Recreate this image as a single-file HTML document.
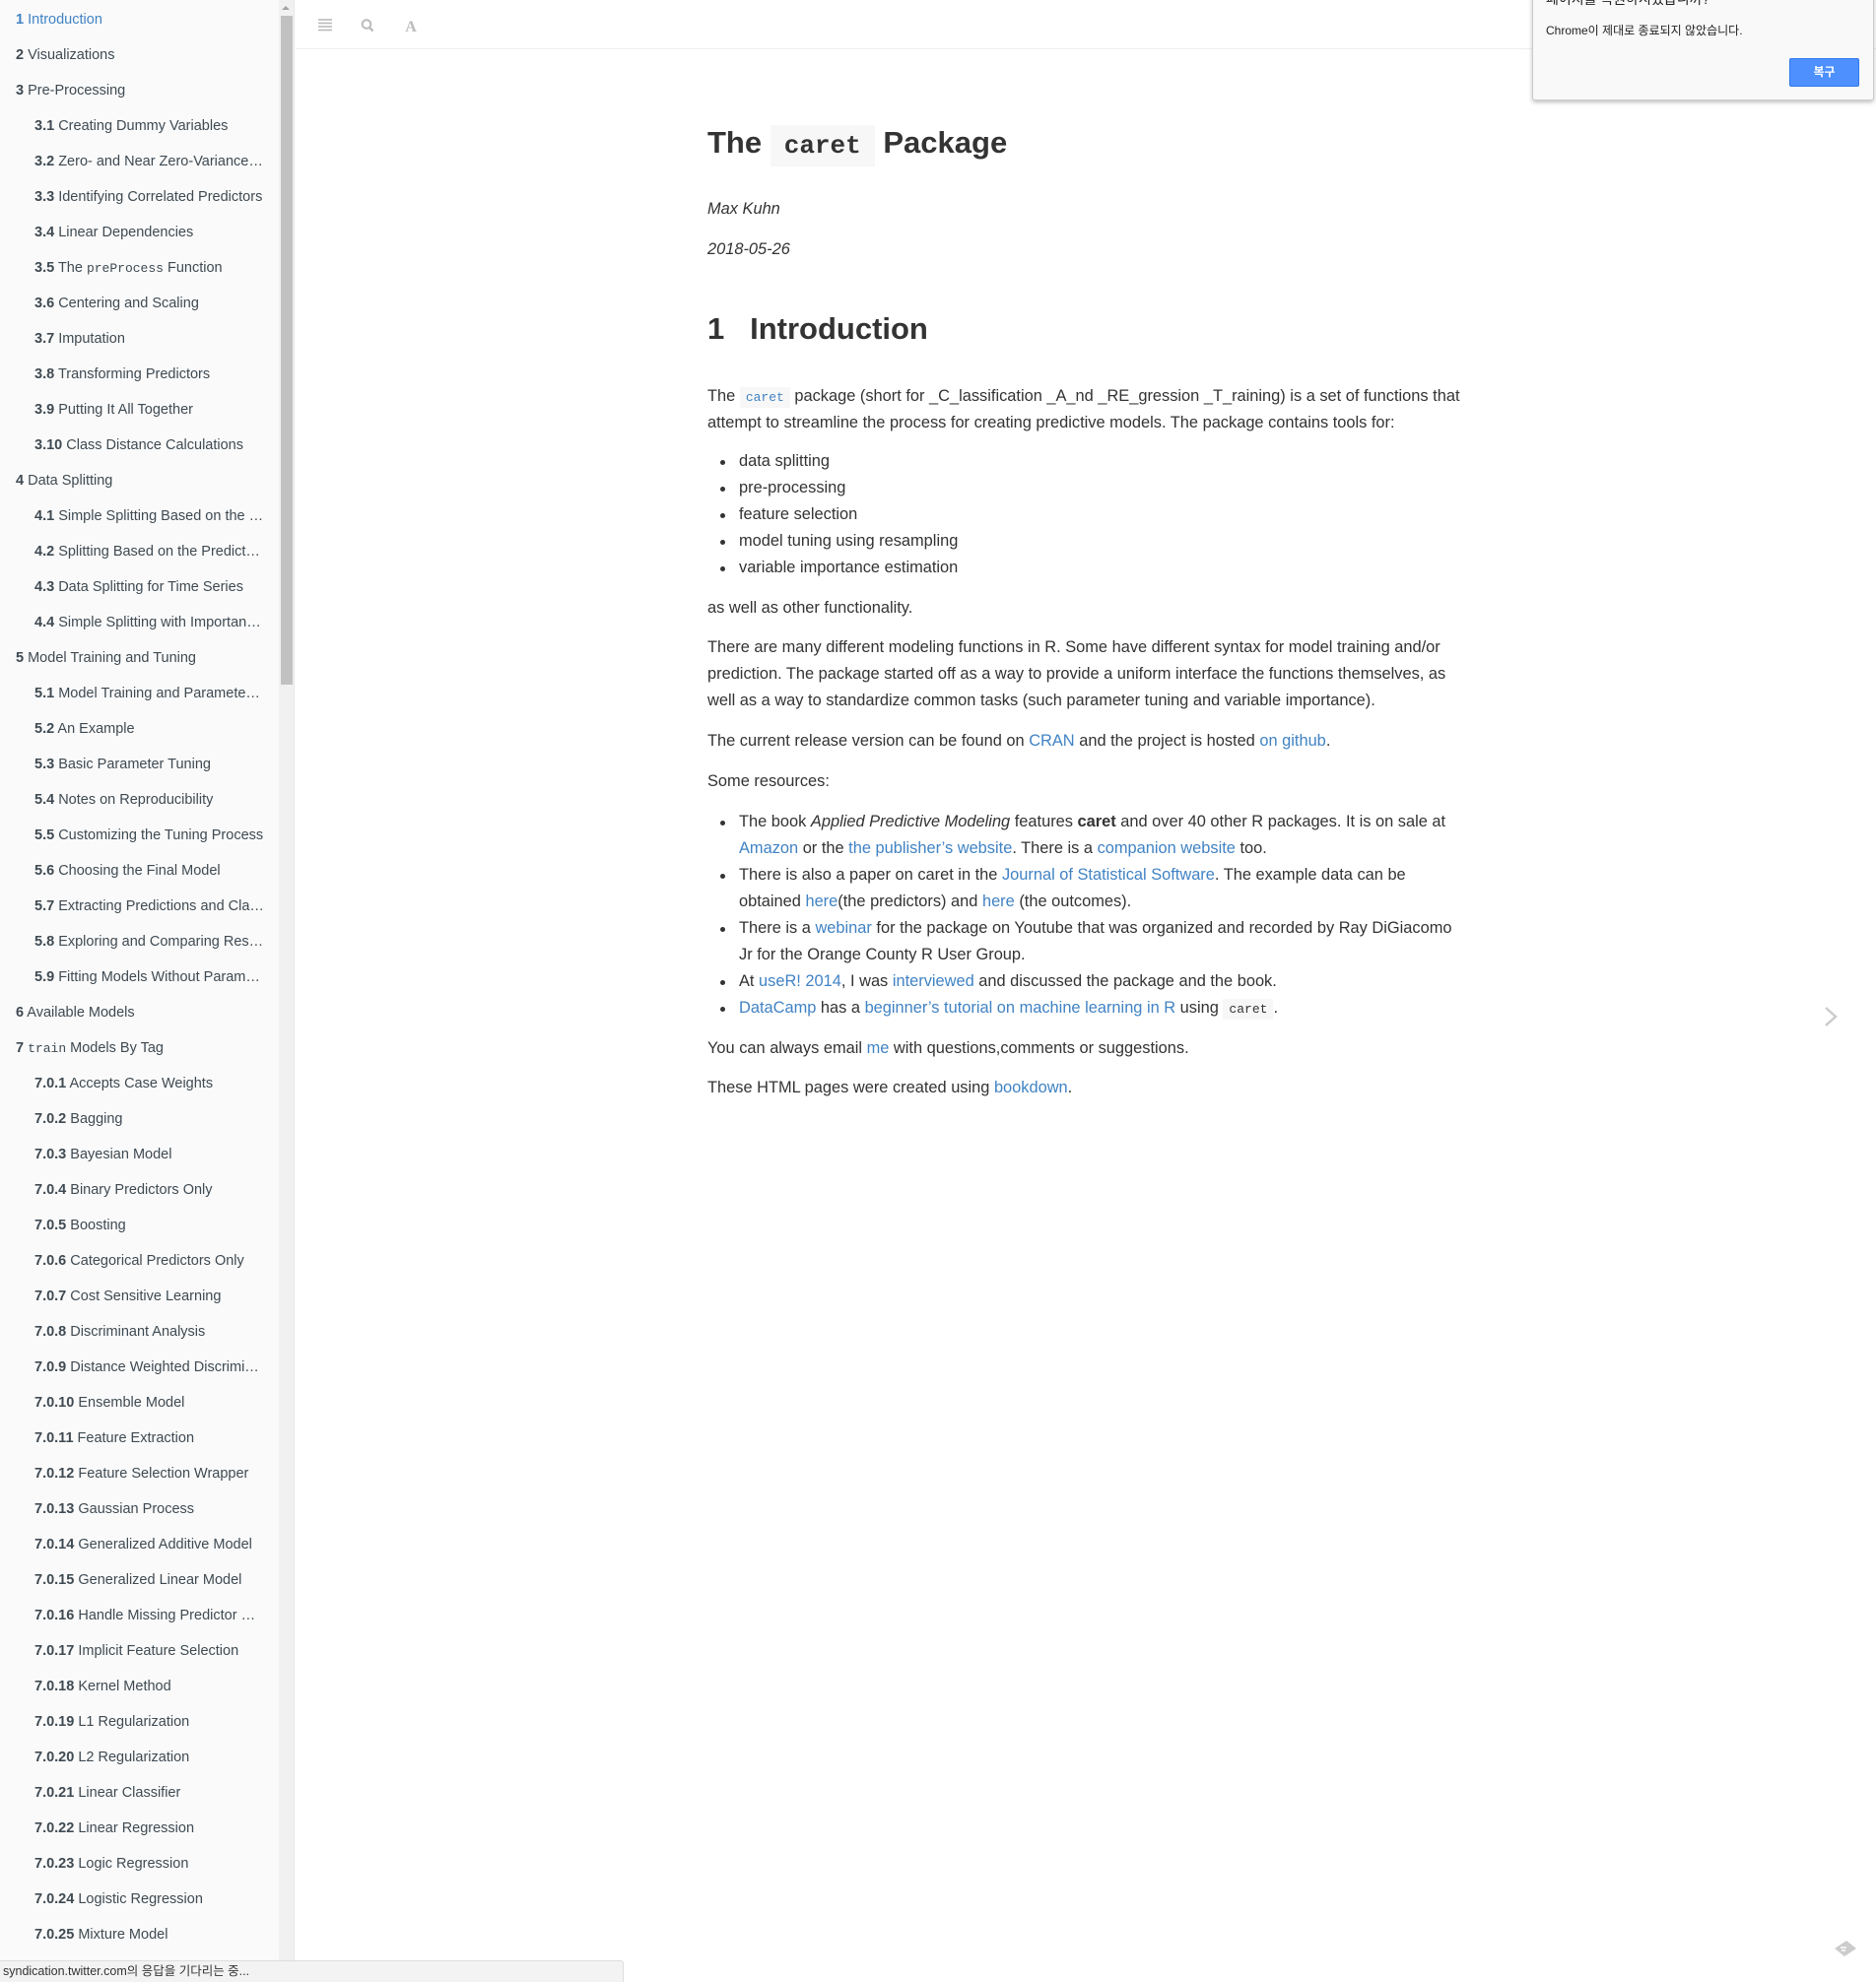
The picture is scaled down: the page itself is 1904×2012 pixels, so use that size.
<!DOCTYPE html>
<html><head><meta charset="utf-8"><style>
*{margin:0;padding:0;box-sizing:border-box}
body{width:1904px;height:2012px;overflow:hidden;background:#fff;font-family:"Liberation Sans","Noto Sans CJK KR",sans-serif;color:#333;position:relative}
#side{position:absolute;left:0;top:0;width:283px;height:2012px;background:#fafafa}
#side div{position:absolute;white-space:nowrap;font-size:14.5px;color:#3f4a52;line-height:20px;transform:translateY(2px)}
#side b{font-weight:bold}
#track{position:absolute;left:283px;top:0;width:16px;height:2012px;background:#f1f1f1;border-right:1px solid #e6e6e6}
#thumb{position:absolute;left:285px;top:16px;width:12px;height:679px;background:#c1c1c1}
#bar{position:absolute;left:300px;top:0;right:0;height:50px;border-bottom:1px solid #eee}
#main{position:absolute;left:0;top:2px;width:1904px;height:1200px}
.t{position:absolute;white-space:nowrap;font-size:16.4px;line-height:27px;color:#333}
a{color:#4183c4;text-decoration:none}
code{font-family:"Liberation Mono",monospace;background:#f7f7f7;font-size:13px;padding:3px 6px;color:#333}
.ac{color:#4183c4}
li.t::before{content:"";position:absolute;left:-19px;top:12px;width:5px;height:5px;border-radius:50%;background:#333}
</style></head><body>
<div id="side">
<div style="left:16px;top:8px;color:#4183c4"><b>1</b> Introduction</div>
<div style="left:16px;top:44px"><b>2</b> Visualizations</div>
<div style="left:16px;top:80px"><b>3</b> Pre-Processing</div>
<div style="left:35px;top:116px"><b>3.1</b> Creating Dummy Variables</div>
<div style="left:35px;top:152px"><b>3.2</b> Zero- and Near Zero-Variance…</div>
<div style="left:35px;top:188px"><b>3.3</b> Identifying Correlated Predictors</div>
<div style="left:35px;top:224px"><b>3.4</b> Linear Dependencies</div>
<div style="left:35px;top:260px"><b>3.5</b> The <span style="font-family:'Liberation Mono',monospace;font-size:13px">preProcess</span> Function</div>
<div style="left:35px;top:296px"><b>3.6</b> Centering and Scaling</div>
<div style="left:35px;top:332px"><b>3.7</b> Imputation</div>
<div style="left:35px;top:368px"><b>3.8</b> Transforming Predictors</div>
<div style="left:35px;top:404px"><b>3.9</b> Putting It All Together</div>
<div style="left:35px;top:440px"><b>3.10</b> Class Distance Calculations</div>
<div style="left:16px;top:476px"><b>4</b> Data Splitting</div>
<div style="left:35px;top:512px"><b>4.1</b> Simple Splitting Based on the …</div>
<div style="left:35px;top:548px"><b>4.2</b> Splitting Based on the Predict…</div>
<div style="left:35px;top:584px"><b>4.3</b> Data Splitting for Time Series</div>
<div style="left:35px;top:620px"><b>4.4</b> Simple Splitting with Importan…</div>
<div style="left:16px;top:656px"><b>5</b> Model Training and Tuning</div>
<div style="left:35px;top:692px"><b>5.1</b> Model Training and Paramete…</div>
<div style="left:35px;top:728px"><b>5.2</b> An Example</div>
<div style="left:35px;top:764px"><b>5.3</b> Basic Parameter Tuning</div>
<div style="left:35px;top:800px"><b>5.4</b> Notes on Reproducibility</div>
<div style="left:35px;top:836px"><b>5.5</b> Customizing the Tuning Process</div>
<div style="left:35px;top:872px"><b>5.6</b> Choosing the Final Model</div>
<div style="left:35px;top:908px"><b>5.7</b> Extracting Predictions and Cla…</div>
<div style="left:35px;top:944px"><b>5.8</b> Exploring and Comparing Res…</div>
<div style="left:35px;top:980px"><b>5.9</b> Fitting Models Without Param…</div>
<div style="left:16px;top:1016px"><b>6</b> Available Models</div>
<div style="left:16px;top:1052px"><b>7</b> <span style="font-family:'Liberation Mono',monospace;font-size:13px">train</span> Models By Tag</div>
<div style="left:35px;top:1088px"><b>7.0.1</b> Accepts Case Weights</div>
<div style="left:35px;top:1124px"><b>7.0.2</b> Bagging</div>
<div style="left:35px;top:1160px"><b>7.0.3</b> Bayesian Model</div>
<div style="left:35px;top:1196px"><b>7.0.4</b> Binary Predictors Only</div>
<div style="left:35px;top:1232px"><b>7.0.5</b> Boosting</div>
<div style="left:35px;top:1268px"><b>7.0.6</b> Categorical Predictors Only</div>
<div style="left:35px;top:1304px"><b>7.0.7</b> Cost Sensitive Learning</div>
<div style="left:35px;top:1340px"><b>7.0.8</b> Discriminant Analysis</div>
<div style="left:35px;top:1376px"><b>7.0.9</b> Distance Weighted Discrimi…</div>
<div style="left:35px;top:1412px"><b>7.0.10</b> Ensemble Model</div>
<div style="left:35px;top:1448px"><b>7.0.11</b> Feature Extraction</div>
<div style="left:35px;top:1484px"><b>7.0.12</b> Feature Selection Wrapper</div>
<div style="left:35px;top:1520px"><b>7.0.13</b> Gaussian Process</div>
<div style="left:35px;top:1556px"><b>7.0.14</b> Generalized Additive Model</div>
<div style="left:35px;top:1592px"><b>7.0.15</b> Generalized Linear Model</div>
<div style="left:35px;top:1628px"><b>7.0.16</b> Handle Missing Predictor …</div>
<div style="left:35px;top:1664px"><b>7.0.17</b> Implicit Feature Selection</div>
<div style="left:35px;top:1700px"><b>7.0.18</b> Kernel Method</div>
<div style="left:35px;top:1736px"><b>7.0.19</b> L1 Regularization</div>
<div style="left:35px;top:1772px"><b>7.0.20</b> L2 Regularization</div>
<div style="left:35px;top:1808px"><b>7.0.21</b> Linear Classifier</div>
<div style="left:35px;top:1844px"><b>7.0.22</b> Linear Regression</div>
<div style="left:35px;top:1880px"><b>7.0.23</b> Logic Regression</div>
<div style="left:35px;top:1916px"><b>7.0.24</b> Logistic Regression</div>
<div style="left:35px;top:1952px"><b>7.0.25</b> Mixture Model</div>
</div>
<div id="track"></div><div id="thumb"></div>
<div style="position:absolute;left:286px;top:6px;width:0;height:0;border-left:4px solid transparent;border-right:4px solid transparent;border-bottom:4px solid #a3a3a3"></div>
<div id="bar"></div>
<svg style="position:absolute;left:322px;top:17px" width="104" height="18">
<g stroke="#bbb" stroke-width="1.6"><line x1="1" y1="3" x2="15" y2="3"/><line x1="1" y1="6.5" x2="15" y2="6.5"/><line x1="1" y1="10" x2="15" y2="10"/><line x1="1" y1="13.5" x2="15" y2="13.5"/></g>
<circle cx="50" cy="7.5" r="4.3" fill="none" stroke="#bbb" stroke-width="2"/><line x1="53" y1="11" x2="56.5" y2="14.5" stroke="#bbb" stroke-width="2.4"/>
<text x="95" y="15" font-family="Liberation Serif" font-weight="bold" font-size="16" fill="#bbb" text-anchor="middle">A</text>
</svg>

<div id="main">
<div class="t" style="left:718px;top:122px;font-size:31px;font-weight:bold;line-height:42px;color:#333">The <span style="font-family:'Liberation Mono',monospace;font-size:26px;font-weight:bold;background:#f7f7f7;padding:6px 14px;color:#333">caret</span> Package</div>
<div class="t" style="left:718px;top:197px;font-style:italic">Max Kuhn</div>
<div class="t" style="left:718px;top:238px;font-style:italic">2018-05-26</div>
<div class="t" style="left:718px;top:311px;font-size:31px;font-weight:bold;line-height:42px">1&nbsp;&nbsp; Introduction</div>

<div class="t" style="left:718px;top:387px">The <code class="ac" style="color:#4183c4">caret</code> package (short for _C_lassification _A_nd _RE_gression _T_raining) is a set of functions that</div>
<div class="t" style="left:718px;top:414px">attempt to streamline the process for creating predictive models. The package contains tools for:</div>
<ul style="list-style:none">
<li class="t" style="left:750px;top:453px">data splitting</li>
<li class="t" style="left:750px;top:480px">pre-processing</li>
<li class="t" style="left:750px;top:507px">feature selection</li>
<li class="t" style="left:750px;top:534px">model tuning using resampling</li>
<li class="t" style="left:750px;top:561px">variable importance estimation</li>
</ul>
<div class="t" style="left:718px;top:602px">as well as other functionality.</div>
<div class="t" style="left:718px;top:642px">There are many different modeling functions in R. Some have different syntax for model training and/or</div>
<div class="t" style="left:718px;top:669px">prediction. The package started off as a way to provide a uniform interface the functions themselves, as</div>
<div class="t" style="left:718px;top:696px">well as a way to standardize common tasks (such parameter tuning and variable importance).</div>
<div class="t" style="left:718px;top:737px">The current release version can be found on <a>CRAN</a> and the project is hosted <a>on github</a>.</div>
<div class="t" style="left:718px;top:778px">Some resources:</div>
<ul style="list-style:none">
<li class="t" style="left:750px;top:819px">The book <i>Applied Predictive Modeling</i> features <b>caret</b> and over 40 other R packages. It is on sale at</li>
<div class="t" style="left:750px;top:846px"><a>Amazon</a> or the <a>the publisher’s website</a>. There is a <a>companion website</a> too.</div>
<li class="t" style="left:750px;top:873px">There is also a paper on caret in the <a>Journal of Statistical Software</a>. The example data can be</li>
<div class="t" style="left:750px;top:900px">obtained <a>here</a>(the predictors) and <a>here</a> (the outcomes).</div>
<li class="t" style="left:750px;top:927px">There is a <a>webinar</a> for the package on Youtube that was organized and recorded by Ray DiGiacomo</li>
<div class="t" style="left:750px;top:954px">Jr for the Orange County R User Group.</div>
<li class="t" style="left:750px;top:981px">At <a>useR! 2014</a>, I was <a>interviewed</a> and discussed the package and the book.</li>
<li class="t" style="left:750px;top:1008px"><a>DataCamp</a> has a <a>beginner’s tutorial on machine learning in R</a> using <code>caret</code>.</li>
</ul>
<div class="t" style="left:718px;top:1049px">You can always email <a>me</a> with questions,comments or suggestions.</div>
<div class="t" style="left:718px;top:1089px">These HTML pages were created using <a>bookdown</a>.</div>
</div>

<svg style="position:absolute;left:1850px;top:1020px" width="16" height="24"><polyline points="3,3 13,12 3,21" fill="none" stroke="#ccc" stroke-width="2.5"/></svg>
<svg style="position:absolute;left:1860px;top:1968px" width="26" height="20"><polygon points="2,10 14,2 24,10 12,18" fill="#ccc"/><g stroke="#fff" stroke-width="1.5"><line x1="8" y1="9" x2="14" y2="9"/><line x1="9" y1="12" x2="13" y2="12"/></g></svg>

<div style="position:absolute;left:1555px;top:-4px;width:347px;height:106px;background:#f9f9f9;border:1px solid #ccc;box-shadow:0 2px 4px rgba(0,0,0,.25);border-radius:0 0 3px 3px">
<div style="position:absolute;left:13px;top:-8px;font-size:14px;color:#222;white-space:nowrap">페이지를 복원하시겠습니까?</div>
<div style="position:absolute;left:13px;top:25px;font-size:12px;color:#222;white-space:nowrap">Chrome이 제대로 종료되지 않았습니다.</div>
<div style="position:absolute;left:260px;top:62px;width:71px;height:29px;background:#4d90fe;border:1px solid #3079ed;border-radius:2px;color:#fff;font-size:12px;font-weight:bold;text-align:center;line-height:27px">복구</div>
</div>

<div style="position:absolute;left:0;top:1990px;width:633px;height:22px;background:#f3f3f3;border:1px solid #ddd;border-left:none;border-bottom:none;border-radius:0 3px 0 0;font-size:12.5px;color:#333;line-height:20px;padding-left:3px;white-space:nowrap">syndication.twitter.com의 응답을 기다리는 중...</div>
</body></html>
